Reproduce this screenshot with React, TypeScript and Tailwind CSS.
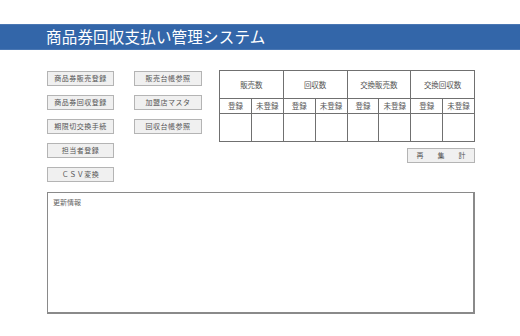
import { Fragment } from 'react';

const leftButtons = ['商品券販売登録', '商品券回収登録', '期限切交換手続', '担当者登録', 'ＣＳＶ変換'];
const midButtons = ['販売台帳参照', '加盟店マスタ', '回収台帳参照'];
const groups = ['販売数', '回収数', '交換販売数', '交換回収数'];

function Btn({ label }: { label: string }) {
  return (
    <button className="w-full h-[15px] flex items-center justify-center bg-[#f0f0f0] border border-[#b4b4b4] text-[7px] leading-none text-[#555] tracking-[0.5px]">
      {label}
    </button>
  );
}

export default function App() {
  return (
    <div
      className="w-[520px] h-[336px] bg-white pt-[24px]"
      style={{ fontFamily: '"Noto Sans CJK JP", "Noto Sans", sans-serif' }}
    >
      {/* header bar */}
      <header className="h-[26px] bg-[#3366a9] border-y border-[#4a77b3] flex items-center pl-[46px]">
        <h1 className="text-white text-[15.5px] leading-none tracking-[0.2px]">商品券回収支払い管理システム</h1>
      </header>

      <div className="ml-[47px] w-[428px]">
        <div className="flex">
          <div className="w-[67px] mt-[21px] flex flex-col gap-[9px]">
            {leftButtons.map(b => <Btn key={b} label={b} />)}
          </div>
          <div className="w-[68px] ml-[20px] mt-[21px] flex flex-col gap-[9px]">
            {midButtons.map(b => <Btn key={b} label={b} />)}
          </div>

          <div className="ml-[17px] mt-[20px] w-[256px] flex flex-col items-end">
            <table className="w-full border-collapse table-fixed text-[7.5px] text-[#555]">
              <tbody>
                <tr className="h-[28px]">
                  {groups.map(g => (
                    <td key={g} colSpan={2} className="border border-[#707070] text-center">{g}</td>
                  ))}
                </tr>
                <tr className="h-[15px]">
                  {groups.map(g => (
                    <Fragment key={g}>
                      <td className="border border-[#707070] text-center leading-none">登録</td>
                      <td className="border border-[#707070] text-center leading-none">未登録</td>
                    </Fragment>
                  ))}
                </tr>
                <tr className="h-[28px]">
                  {Array.from({ length: 8 }).map((_, i) => (
                    <td key={i} className="border border-[#707070]"></td>
                  ))}
                </tr>
              </tbody>
            </table>
            <button className="mt-[6px] w-[68px] h-[15px] flex items-center justify-center gap-[14px] bg-[#f0f0f0] border border-[#b4b4b4] text-[7px] leading-none text-[#555]">
              <span>再</span>
              <span>集</span>
              <span>計</span>
            </button>
          </div>
        </div>

        {/* update info */}
        <div className="mt-[10px] h-[122px] border border-[#8a8a8a] border-r-2 border-b-2 px-[5px] py-[6px]">
          <p className="text-[7px] text-[#666] leading-none">更新情報</p>
        </div>
      </div>
    </div>
  );
}
